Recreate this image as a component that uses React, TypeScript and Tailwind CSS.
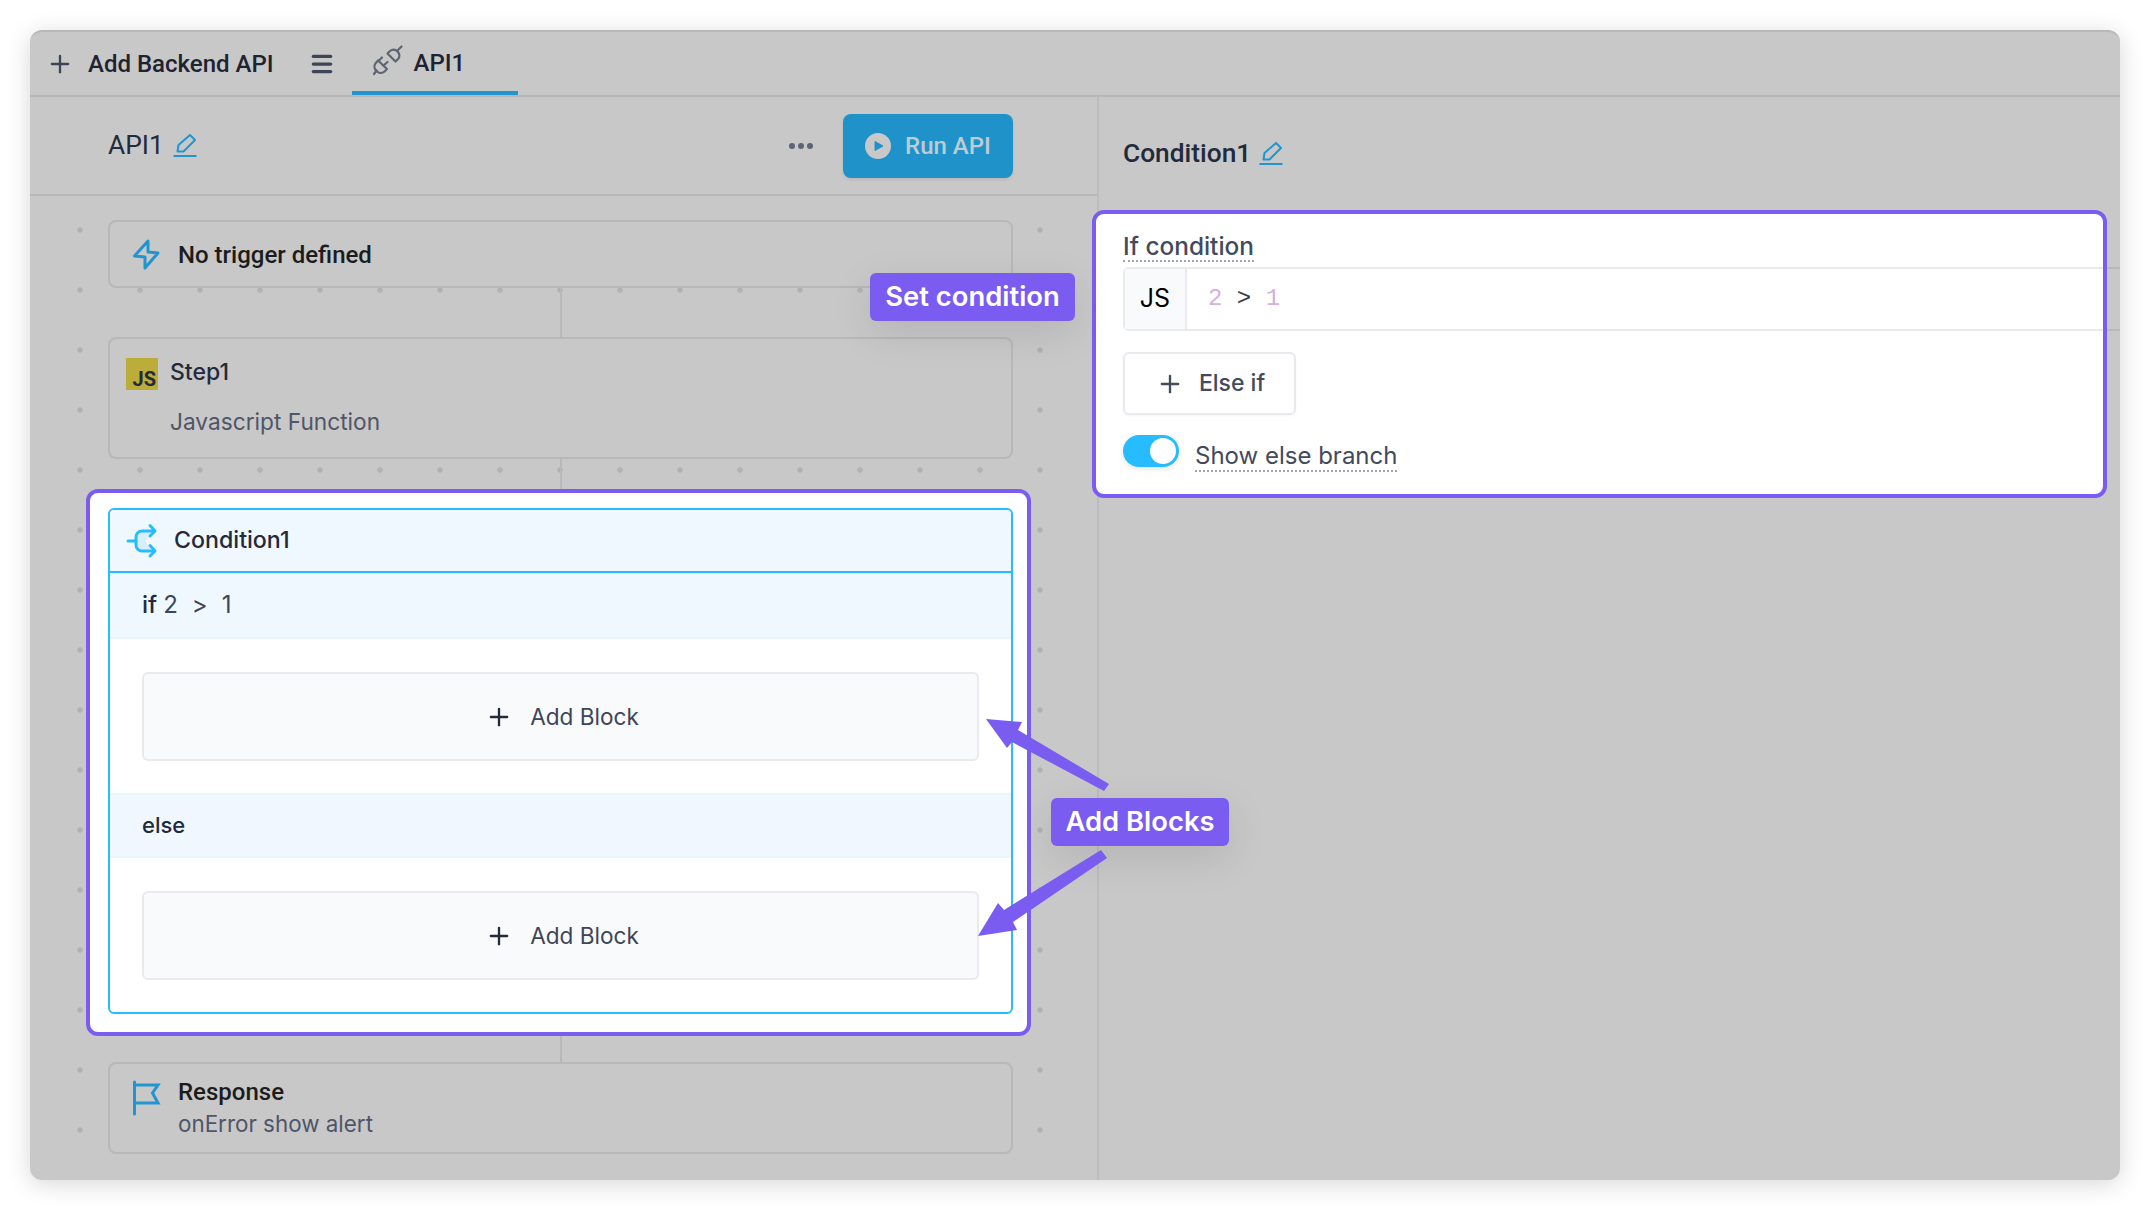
import React from "react";
import { Plus, Menu } from "lucide-react";

const roboto = "font-['Roboto',sans-serif]";
const inter = "font-['Inter',sans-serif]";

function Pencil({ color = "#2095cf" }: { color?: string }) {
  return (
    <svg width="40" height="40" viewBox="0 0 40 40" fill="none" stroke={color} className="-my-2 -ml-2">
      <path d="M3.5 30H26.5" strokeWidth="2" />
      <path d="M7.5 25.5L8.5 19L20 9L25 14L13.5 25.5Z" strokeWidth="2" strokeLinejoin="round" />
    </svg>
  );
}

function PlugIcon() {
  return (
    <svg width="50" height="50" viewBox="0 0 50 50" fill="none" stroke="#5d6472" strokeWidth="2.2" strokeLinecap="round" strokeLinejoin="round">
      <path d="M27.5 16.5L35.5 24.5L38 22A5.5 5.5 0 0 0 38 15L36.5 13.5A5.5 5.5 0 0 0 30 14Z" />
      <path d="M38 13L41.5 9.5" />
      <path d="M18 23.5L27 32L24.5 34.5A5.5 5.5 0 0 1 17 34.5L15.8 33.2A5.5 5.5 0 0 1 15.8 26Z" />
      <path d="M18.5 24L22 20.5M23.5 28.5L27.5 25M16.5 33.5L14 37" />
    </svg>
  );
}

function Bolt() {
  return (
    <svg width="50" height="50" viewBox="0 0 50 50" fill="none" stroke="#2095cf" strokeWidth="3" strokeLinejoin="round" className="-m-[9px]">
      <path d="M23 12L23 23L33 24L20 39L20 28L9.5 27Z" />
    </svg>
  );
}

function Flag() {
  return (
    <svg width="50" height="50" viewBox="0 0 50 50" fill="none" stroke="#2095cf" strokeWidth="3" className="-m-[9px]">
      <path d="M9.5 11V43" strokeLinecap="round" />
      <path d="M9.5 14H33L27.5 22L33 32H9.5" />
    </svg>
  );
}

function CondIcon() {
  return (
    <svg width="50" height="50" viewBox="0 0 50 50" fill="none" className="-m-[7px]">
      <path d="M22 15H31L25.5 25L31 35H22A6 6 0 0 1 16 29V21A6 6 0 0 1 22 15Z" fill="#d7eeff" />
      <g stroke="#26bcff" strokeWidth="3" strokeLinecap="round" strokeLinejoin="round">
        <path d="M8 25H16" />
        <path d="M34.5 15H22A6 6 0 0 0 16 21V29A6 6 0 0 0 22 35H34.5" />
        <path d="M30 9.5L35 15L30 20M30 29.5L35 35L30 40" />
      </g>
    </svg>
  );
}

function JsLogo() {
  return (
    <div className={`w-8 h-8 bg-[#bcac3a] flex items-end justify-end pr-[2px] text-[#232a3b] font-bold text-[20px] leading-[22px] ${roboto}`}>
      JS
    </div>
  );
}

function Connector({ h }: { h: string }) {
  return <div className={`w-[2px] ml-[452px] bg-[#b8b8bb] ${h}`} />;
}

function AddBlock() {
  return (
    <div className="h-[89px] flex items-center justify-center gap-[17px] pl-[3px] rounded-md border-2 border-[#e9eaee] bg-[#f9fafc] text-[#3d4557]">
      <Plus size={28} strokeWidth={2} className="text-[#232a3b]" />
      <span className={`text-[22.6px] ${inter}`}>Add Block</span>
    </div>
  );
}

function Card({ className = "", children }: { className?: string; children: React.ReactNode }) {
  return (
    <div className={`w-[905px] rounded-lg border-2 border-[#b8b8bb] bg-[#c8c8c8] ${className}`}>{children}</div>
  );
}

export default function App() {
  return (
    <div className="relative w-[2150px] h-[1210px] bg-white pt-[30px] pl-[30px] overflow-hidden">
      <div className="w-[2090px] h-[1150px] rounded-xl bg-[#c8c8c8] flex flex-col shadow-[0_4px_24px_rgba(0,0,0,0.16)] border-t-2 border-[#b8b8b8]">
        {/* tab bar */}
        <div className="h-[65px] shrink-0 flex items-stretch border-b-2 border-[#b8b8b8] pl-[16px] text-[#1e2331]">
          <div className="flex items-center">
            <Plus size={28} strokeWidth={2} className="text-[#3d4557]" />
            <span className={`ml-[14px] text-[24px] font-medium ${roboto}`}>Add Backend API</span>
            <Menu size={26} strokeWidth={3} className="ml-[35px] text-[#3d4557]" />
          </div>
          <div className="ml-[17px] w-[166px] flex items-center pl-[8px] border-b-4 border-[#2095cf]">
            <PlugIcon />
            <span className={`ml-[4px] mt-[2px] text-[24px] font-medium ${roboto}`}>API1</span>
          </div>
        </div>

        <div className="flex-1 flex min-h-0">
          {/* left pane */}
          <div className="w-[1069px] shrink-0 flex flex-col border-r-2 border-[#bdbdbd]">
            <div className="h-[99px] shrink-0 flex items-center pl-[78px] pr-[84px] border-b-2 border-[#b8b8b8]">
              <span className={`text-[26.4px] text-[#232a3b] ${roboto}`}>API1</span>
              <span className="ml-[14px] mt-[1px]"><Pencil /></span>
              <div className="ml-auto flex items-center gap-[3px] mr-[30px]">
                <i className="w-[6px] h-[6px] rounded-full bg-[#5d6472]" />
                <i className="w-[6px] h-[6px] rounded-full bg-[#5d6472]" />
                <i className="w-[6px] h-[6px] rounded-full bg-[#5d6472]" />
              </div>
              <div className="w-[170px] h-[64px] rounded-lg bg-[#1f93c9] flex items-center justify-center gap-[14px] shadow-[0_2px_3px_rgba(0,0,0,0.08)]">
                <svg width="26" height="26" viewBox="0 0 26 26">
                  <circle cx="13" cy="13" r="13" fill="#c8c8c8" />
                  <path d="M10 8.5L18 13L10 17.5Z" fill="#1f93c9" stroke="#1f93c9" strokeWidth="1" strokeLinejoin="round" />
                </svg>
                <span className={`text-[24px] text-[#bdcbd3] font-medium ${roboto}`}>Run API</span>
              </div>
            </div>

            <div className="flex-1 pt-[24px] pl-[78px] flex flex-col items-start bg-[radial-gradient(circle,#b2b2b7_2.5px,transparent_3px)] bg-[size:60px_60px] bg-[position:20px_4px]">
              <Card className="h-[68px] flex items-center pl-[24px]">
                <Bolt />
                <span className={`ml-[12px] mt-[1px] text-[24px] font-medium text-[#1c1c1c] ${roboto}`}>No trigger defined</span>
              </Card>
              <Connector h="h-[49px]" />
              <Card className="h-[122px] pl-[16px] pt-[19px]">
                <div className="flex items-center">
                  <JsLogo />
                  <span className={`ml-3 -mt-[3px] text-[23px] font-medium text-[#232a3b] ${inter}`}>Step1</span>
                </div>
                <div className={`mt-[15px] ml-[44px] text-[22.7px] text-[#4f5668] ${inter}`}>Javascript Function</div>
              </Card>
              <Connector h="h-[30px]" />

              {/* condition spotlight */}
              <div className="relative z-10 -ml-[22px] w-[945px] h-[547px] rounded-xl border-4 border-[#7a5cf0] bg-white pl-[18px] pt-[15px]">
                <div className="w-[905px] h-[506px] rounded-md border-2 border-[#26bcff] flex flex-col overflow-hidden">
                  <div className="h-[63px] shrink-0 flex items-center pl-[17px] bg-[#f0f8ff] border-b-2 border-[#26bcff]">
                    <CondIcon />
                    <span className={`ml-[11px] text-[23.2px] font-medium text-[#232a3b] ${inter}`}>Condition1</span>
                  </div>
                  <div className={`h-[66px] shrink-0 flex items-center pl-[32px] bg-[#f0f8ff] border-b-2 border-[#e6f5ff] text-[24px] text-[#232a3b] ${inter}`}>
                    <span className="font-medium">if</span>
                    <span className="ml-[6px] text-[#3d4557]">2</span>
                    <span className="ml-[14px] text-[#3d4557]">&gt;</span>
                    <span className="ml-[14px] text-[#3d4557]">1</span>
                  </div>
                  <div className="px-[32px] pt-[33px] pb-[32px]">
                    <AddBlock />
                  </div>
                  <div className={`h-[65px] shrink-0 flex items-center pl-[32px] bg-[#f0f7ff] border-y-2 border-[#e6f5ff] text-[22px] font-medium text-[#232a3b] ${inter}`}>
                    else
                  </div>
                  <div className="px-[32px] pt-[33px]">
                    <AddBlock />
                  </div>
                </div>
              </div>
              <Connector h="h-[26px]" />
              <Card className="h-[92px] flex pl-[24px] pt-[11px]">
                <div className="mt-[5px]"><Flag /></div>
                <div className="ml-[12px] pt-[1px]">
                  <div className={`text-[24px] leading-[32px] font-medium text-[#1c1c1c] ${roboto}`}>Response</div>
                  <div className={`text-[22.4px] leading-[32px] text-[#4f5668] ${inter}`}>onError show alert</div>
                </div>
              </Card>
            </div>
          </div>

          {/* right pane */}
          <div className="flex-1 min-w-0 flex flex-col">
            <div className="h-[113px] shrink-0 flex items-center pl-[24px]">
              <span className={`text-[26.3px] font-medium text-[#232a3b] ${roboto}`}>Condition1</span>
              <span className="ml-[13px]"><Pencil /></span>
            </div>
            <div className="relative z-10 -ml-[7px] mr-[13px] h-[288px] rounded-xl border-4 border-[#7a5cf0] bg-white pl-[27px] pt-[19px]">
              <span className={`inline-block text-[24.4px] leading-[27px] font-medium text-[#434a5c] border-b-2 border-dotted border-[#9fa3b2] ${inter}`}>If condition</span>
              <div className="mt-[5px] h-[64px] flex rounded-l-md border-y-2 border-l-2 border-[#e9eaee]">
                <div className={`w-[62px] flex items-center justify-center bg-[#f9fafc] border-r-2 border-[#e9eaee] text-[25px] text-black ${inter}`}>JS</div>
                <div className="flex items-center pl-[21px] font-['Liberation_Mono',monospace] text-[24px] whitespace-pre">
                  <span className="text-[#d5b1dc]">2</span>
                  <span className="text-[#333a46]"> &gt; </span>
                  <span className="text-[#d5b1dc]">1</span>
                </div>
              </div>
              <div className="absolute left-[calc(100%+4px)] top-[53px] w-[13px] h-[2px] bg-[#b8b8bb]" />
              <div className="absolute left-[calc(100%+4px)] top-[115px] w-[13px] h-[2px] bg-[#b8b8bb]" />
              <div className="mt-[21px] w-[173px] h-[63px] flex items-center justify-center gap-[15px] pl-[2px] rounded-md border-2 border-[#e9eaee] shadow-[0_1px_2px_rgba(0,0,0,0.05)]">
                <Plus size={28} strokeWidth={2} className="text-[#434a5c]" />
                <span className={`text-[23px] font-medium text-[#434a5c] ${inter}`}>Else if</span>
              </div>
              <div className="mt-[20px] flex items-start">
                <div className="w-[56px] h-[32px] rounded-full bg-[#26bcff] flex items-center justify-end pr-[3px] shadow-[0_2px_6px_rgba(0,0,0,0.1)]">
                  <div className="w-[26px] h-[26px] rounded-full bg-white" />
                </div>
                <span className={`ml-4 mt-[6px] text-[24px] leading-[29px] text-[#434a5c] border-b-2 border-dotted border-[#9fa3b2] ${inter}`}>Show else branch</span>
              </div>
            </div>
          </div>
        </div>
      </div>

      {/* annotations */}
      <div className={`absolute z-20 left-[870px] top-[273px] w-[205px] h-[48px] rounded-md bg-[#7a5cf0] flex items-center justify-center text-white text-[27.4px] font-semibold shadow-[0_12px_40px_rgba(0,0,0,0.1)] ${inter}`}>
        Set condition
      </div>
      <div className={`absolute z-20 left-[1051px] top-[798px] w-[178px] h-[48px] rounded-md bg-[#7a5cf0] flex items-center justify-center text-white text-[27.4px] font-semibold shadow-[0_12px_40px_rgba(0,0,0,0.1)] ${inter}`}>
        Add Blocks
      </div>
      <svg className="absolute z-20 left-0 top-0 pointer-events-none" width="2150" height="1210" viewBox="0 0 2150 1210" fill="#7a5cf0">
        <polygon points="986,719 1022,722 1018,730 1109,784 1104,791 1012,742 1007,748" />
        <polygon points="978,936 998,903 1004,910 1101,850 1107,858 1013,922 1017,930" />
      </svg>
    </div>
  );
}
